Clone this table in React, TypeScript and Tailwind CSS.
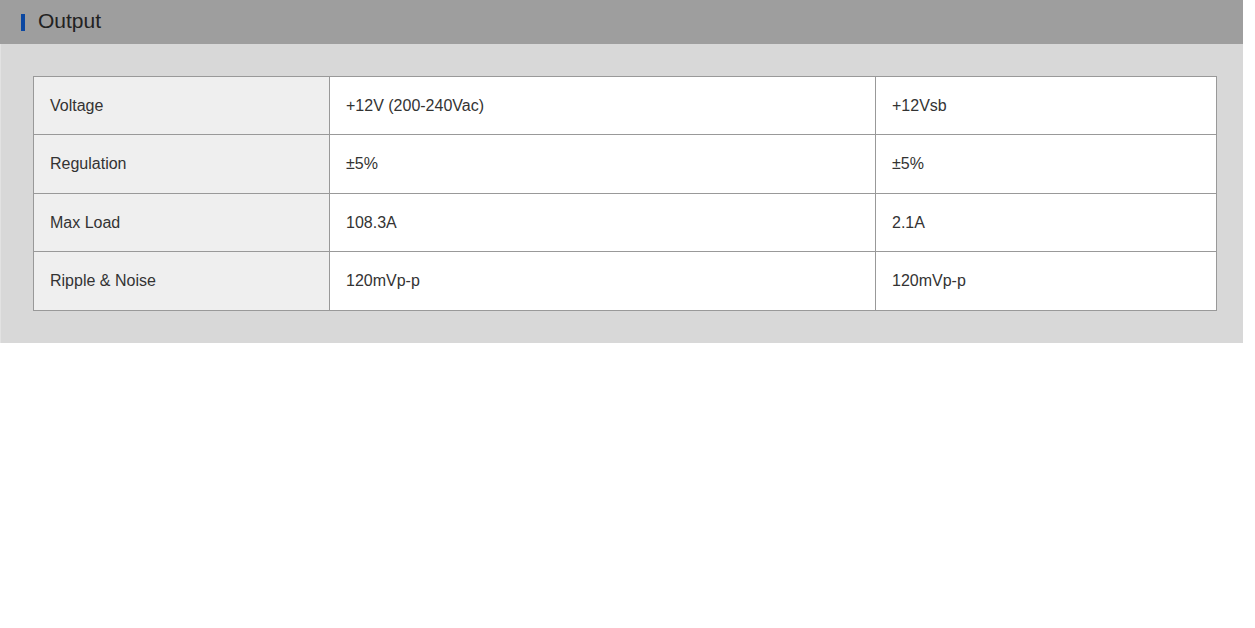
const rows = [
  { label: "Voltage", main: "+12V (200-240Vac)", sb: "+12Vsb", h: "h-[58px]" },
  { label: "Regulation", main: "±5%", sb: "±5%", h: "h-[59px]" },
  { label: "Max Load", main: "108.3A", sb: "2.1A", h: "h-[58px]" },
  { label: "Ripple & Noise", main: "120mVp-p", sb: "120mVp-p", h: "h-[59px]" },
]

export default function App() {
  return (
    <div className="w-[1255px] h-[628px] bg-white" style={{ fontFamily: '"Liberation Sans", Arial, sans-serif' }}>
      <div className="w-[1243px]">
        <div className="flex h-[44px] items-center bg-[#9e9e9e] pl-[21px]">
          <span className="mr-[13px] h-[17px] w-[4px] bg-[#0b47a1]" />
          <h2 className="-mt-[3px] text-[21px] leading-none text-[#222]">Output</h2>
        </div>
        <div className="border-l border-[#e2e2e2] bg-[#d8d8d8] pb-[32px] pl-[32px] pr-[27px] pt-[32px]">
          <table className="w-[1184px] table-fixed border-collapse text-[16px] text-[#333]">
            <colgroup>
              <col className="w-[296px]" />
              <col className="w-[546px]" />
              <col />
            </colgroup>
            <tbody>
              {rows.map((r) => (
                <tr key={r.label} className={r.h}>
                  <td className="border border-[#999] bg-[#efefef] pl-[16px] align-middle">{r.label}</td>
                  <td className="border border-[#999] bg-white pl-[16px] align-middle">{r.main}</td>
                  <td className="border border-[#999] bg-white pl-[16px] align-middle">{r.sb}</td>
                </tr>
              ))}
            </tbody>
          </table>
        </div>
      </div>
    </div>
  )
}
